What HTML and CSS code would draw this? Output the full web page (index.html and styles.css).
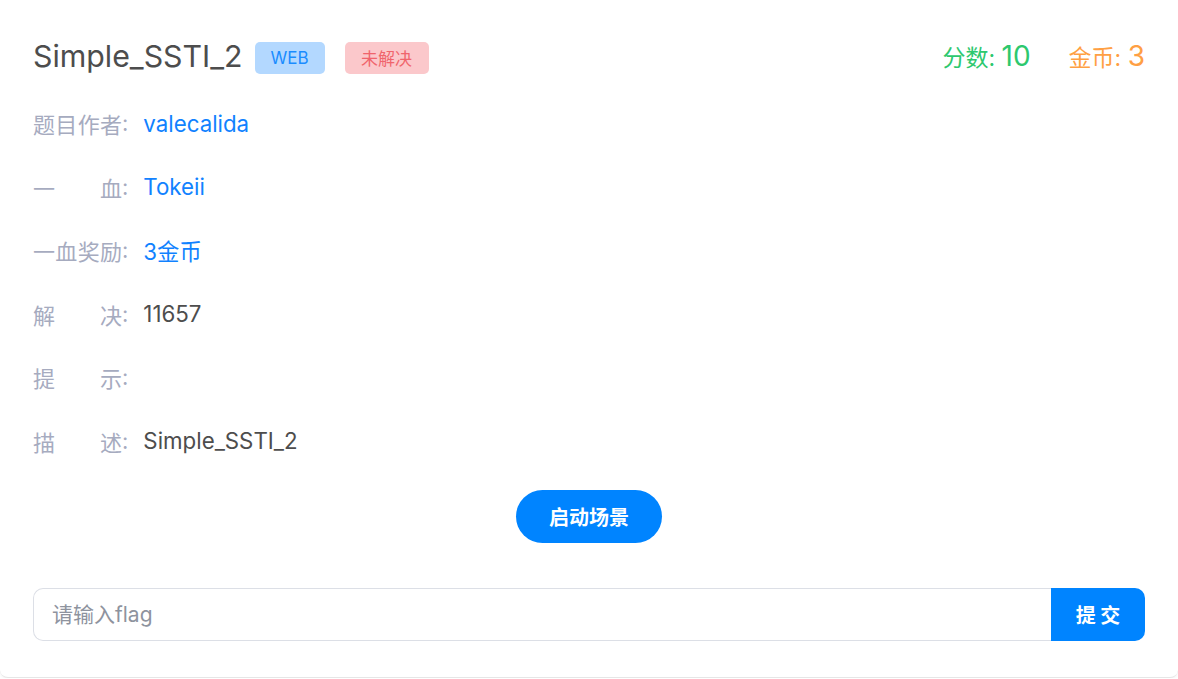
FILE: index.html
```html
<!DOCTYPE html>
<html lang="zh-CN">
<head>
    <meta charset="UTF-8">
    <meta name="viewport" content="width=device-width, initial-scale=1.0">
    <title>Simple_SSTI_2</title>
    <link rel="stylesheet" href="styles.css">
</head>
<body>
    <div class="card">
        <!-- 题目标题 -->
        <div class="head">
            <div class="title-box">
                <span class="title">Simple_SSTI_2</span>
                <span class="tag tag-web">WEB</span>
                <span class="tag tag-unsolved">未解决</span>
            </div>
            <div class="score-box">
                <span class="score">分数: <b>10</b></span>
                <span class="coin">金币: <b>3</b></span>
            </div>
        </div>

        <!-- 题目信息 -->
        <div class="info">
            <div class="row">
                <span class="label">题目作者</span><span class="colon">:</span>
                <span class="value link">valecalida</span>
            </div>
            <div class="row">
                <span class="label">一 血</span><span class="colon">:</span>
                <span class="value link">Tokeii</span>
            </div>
            <div class="row">
                <span class="label">一血奖励</span><span class="colon">:</span>
                <span class="value link">3金币</span>
            </div>
            <div class="row">
                <span class="label">解 决</span><span class="colon">:</span>
                <span class="value">11657</span>
            </div>
            <div class="row">
                <span class="label">提 示</span><span class="colon">:</span>
                <span class="value"></span>
            </div>
            <div class="row">
                <span class="label">描 述</span><span class="colon">:</span>
                <span class="value">Simple_SSTI_2</span>
            </div>
        </div>

        <div class="start">
            <button class="start-btn">启动场景</button>
        </div>

        <!-- flag 提交 -->
        <div class="flag-box">
            <input type="text" class="flag-input" placeholder="请输入flag">
            <button class="submit-btn">提 交</button>
        </div>
    </div>
</body>
</html>
```

FILE: styles.css
```css
/* 기본 스타일 */
body {
    margin: 0;
    padding: 0;
    background-color: #fff;
    font-family: Inter, "Noto Sans CJK SC", sans-serif;
    color: #4d4d4d;
}
.card {
    box-sizing: border-box;
    height: 678px;
    padding: 38px 33px 36px;
    background-color: #fff;
    border-bottom: 1px solid #e6e6e6;
    border-radius: 0 0 8px 8px;
    box-shadow: 0 1px 3px rgba(0, 0, 0, 0.06);
}
.head {
    display: flex;
    justify-content: space-between;
    align-items: center;
    height: 36px;
}
.title-box {
    display: flex;
    align-items: center;
}
.title {
    font-size: 30.3px;
    color: #4d4d4d;
    margin-right: 12px;
}
.tag {
    display: inline-flex;
    align-items: center;
    justify-content: center;
    height: 32px;
    border-radius: 5px;
    font-size: 17px;
    margin-top: 3px;
}
.tag-web {
    width: 70px;
    background-color: #b3d8ff;
    color: #1a8cff;
    margin-right: 20px;
}
.tag-unsolved {
    width: 84px;
    background-color: #fbc8cb;
    color: #f0646c;
}
.score-box {
    display: flex;
    align-items: baseline;
    gap: 38px;
    font-size: 23px;
}
.score-box b {
    font-weight: normal;
    font-size: 28px;
}
.score {
    color: #2dc86e;
}
.coin {
    color: #ff9f43;
}
.info {
    display: flex;
    flex-direction: column;
    gap: 35.6px;
    margin-top: 35px;
}
.row {
    display: flex;
    align-items: center;
    height: 28px;
    font-size: 22.3px;
}
.label {
    flex-shrink: 0;
    width: 89px;
    font-size: 22px;
    white-space: nowrap;
    color: #a6abbf;
    text-align: justify;
    text-align-last: justify;
}
.colon {
    color: #a6abbf;
    font-size: 22px;
    margin-right: 15px;
}
.value {
    color: #4d4d4d;
}
.link {
    color: #1182ff;
}
.start {
    display: flex;
    justify-content: center;
    margin-top: 35px;
}
.start-btn {
    width: 146px;
    height: 53px;
    border: none;
    border-radius: 27px;
    background-color: #0084ff;
    color: #fff;
    font-family: Inter, "Noto Sans CJK SC", sans-serif;
    font-size: 20px;
    font-weight: bold;
    cursor: pointer;
}
.flag-box {
    display: flex;
    margin-top: 45px;
    height: 53px;
}
.flag-input {
    flex: 1;
    box-sizing: border-box;
    height: 53px;
    padding: 0 18px;
    border: 1px solid #dcdfe6;
    border-right: none;
    border-radius: 10px 0 0 10px;
    font-family: Inter, "Noto Sans CJK SC", sans-serif;
    font-size: 21px;
    color: #4d4d4d;
    outline: none;
}
.flag-input::placeholder {
    color: #8e939e;
}
.submit-btn {
    width: 94px;
    height: 53px;
    border: none;
    border-radius: 0 10px 10px 0;
    background-color: #0084ff;
    color: #fff;
    font-family: Inter, "Noto Sans CJK SC", sans-serif;
    font-size: 20px;
    font-weight: bold;
    cursor: pointer;
}
```
